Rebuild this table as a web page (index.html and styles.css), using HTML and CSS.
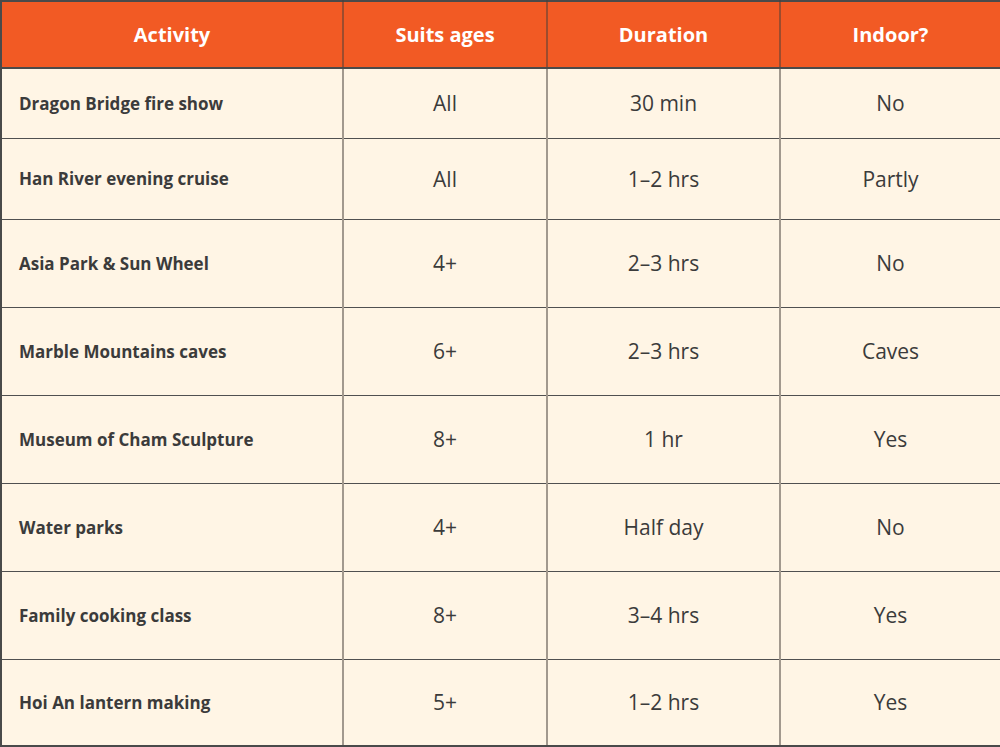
FILE: index.html
```html
<!DOCTYPE html>
<html lang="en">
<head>
<meta charset="utf-8">
<title>Da Nang family activities</title>
<link rel="stylesheet" href="styles.css">
</head>
<body>
<table class="activities">
  <colgroup>
    <col class="c-activity">
    <col class="c-ages">
    <col class="c-duration">
    <col class="c-indoor">
  </colgroup>
  <thead>
    <tr class="head-row">
      <th>Activity</th>
      <th>Suits ages</th>
      <th>Duration</th>
      <th>Indoor?</th>
    </tr>
  </thead>
  <tbody>
    <tr class="r1"><td class="name">Dragon Bridge fire show</td><td>All</td><td>30 min</td><td>No</td></tr>
    <tr class="r2"><td class="name">Han River evening cruise</td><td>All</td><td>1–2 hrs</td><td>Partly</td></tr>
    <tr class="r3"><td class="name">Asia Park &amp; Sun Wheel</td><td>4+</td><td>2–3 hrs</td><td>No</td></tr>
    <tr class="r3"><td class="name">Marble Mountains caves</td><td>6+</td><td>2–3 hrs</td><td>Caves</td></tr>
    <tr class="r3"><td class="name">Museum of Cham Sculpture</td><td>8+</td><td>1 hr</td><td>Yes</td></tr>
    <tr class="r3"><td class="name">Water parks</td><td>4+</td><td>Half day</td><td>No</td></tr>
    <tr class="r3"><td class="name">Family cooking class</td><td>8+</td><td>3–4 hrs</td><td>Yes</td></tr>
    <tr class="r4"><td class="name">Hoi An lantern making</td><td>5+</td><td>1–2 hrs</td><td>Yes</td></tr>
  </tbody>
</table>
</body>
</html>
```

FILE: styles.css
```css
html, body {
  margin: 0;
  padding: 0;
  background: #ffffff;
}

.activities {
  width: 1000px;
  border-collapse: collapse;
  table-layout: fixed;
  font-family: "Open Sans", "Liberation Sans", sans-serif;
  color: #3b3b3b;
  background: #fff5e5;
  border: 2px solid #4a4a4a;
}

.c-activity { width: 342px; }
.c-ages { width: 204px; }
.c-duration { width: 233px; }
.c-indoor { width: 221px; }

.activities th,
.activities td {
  padding: 0;
  text-align: center;
  vertical-align: middle;
  border-top: 1px solid #505050;
  border-bottom: 1px solid #505050;
  border-left: 2px solid rgba(70, 62, 55, 0.5);
  border-right: 2px solid rgba(70, 62, 55, 0.5);
}

.activities th:first-child,
.activities td:first-child {
  border-left: 2px solid #4a4a4a;
}

.activities th:last-child,
.activities td:last-child {
  border-right: 2px solid #4a4a4a;
}

.head-row {
  height: 67px;
  background: #f25a24;
}

.head-row th {
  color: #ffffff;
  font-weight: 700;
  font-size: 20px;
  border-top: 2px solid #4a4a4a;
  border-bottom: 2px solid #4a4a4a;
}

.activities td {
  font-size: 21px;
  font-weight: 400;
}

.activities td.name {
  text-align: left;
  padding-left: 17px;
  font-size: 17px;
  font-weight: 700;
}

.r1 { height: 70px; }
.r2 { height: 81px; }
.r3 { height: 88px; }
.r4 { height: 87px; }

.activities tbody tr:last-child td {
  border-bottom: 2px solid #4a4a4a;
}
```
